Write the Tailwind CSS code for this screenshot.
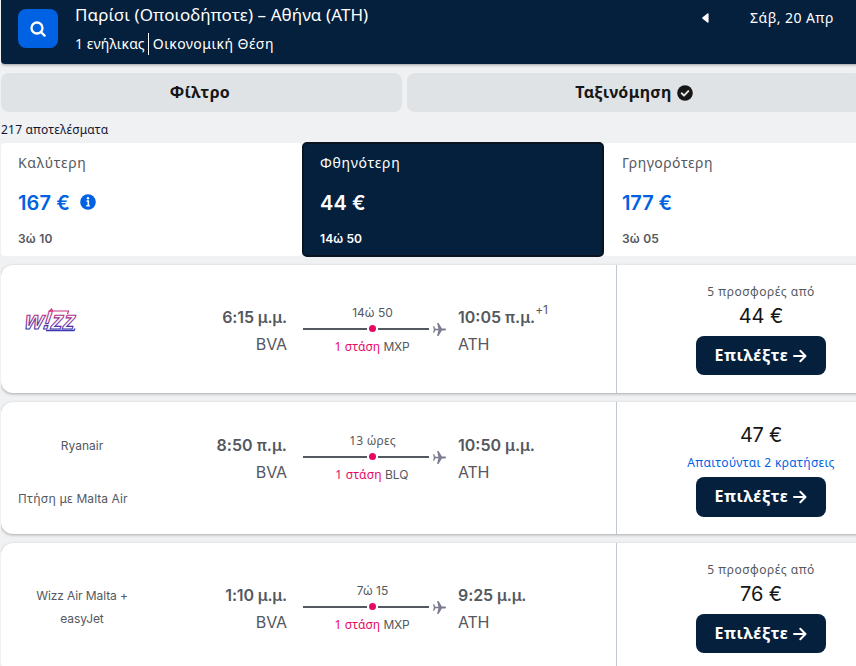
<!DOCTYPE html>
<html lang="el">
<head>
<meta charset="utf-8">
<title>Πτήσεις Παρίσι – Αθήνα</title>
<meta name="viewport" content="width=device-width">
<script src="https://cdn.jsdelivr.net/npm/@tailwindcss/browser@4"></script>
</head>
<body class="h-[666px] w-[856px] overflow-hidden bg-[#eff1f2] font-['Noto_Sans',sans-serif] text-[#545860]">
<svg class="absolute h-0 w-0" aria-hidden="true">
  <defs>
    <symbol id="plane" viewBox="0 0 12 12"><path d="M0 3h1l1.300 2.200h2.700L3.800 0h1.300l3.100 5.100h2.600c1.600 0 1.600 1.800 0 1.800H8.200L5.100 12H3.800l1.200-5.200H2.300L1 9H0l.8-3z" fill="#7b7b90"/></symbol>
    <symbol id="arrow" viewBox="0 0 14 14"><path d="M1 7h11M7.300 1.800L12.500 7l-5.200 5.200" fill="none" stroke="#fff" stroke-width="2" stroke-linecap="round" stroke-linejoin="round"/></symbol>
  </defs>
</svg>
<div class="ml-px flex h-[666px] w-[855px] flex-col overflow-hidden">
  <header class="flex h-16 w-[880px] shrink-0 rounded-bl-[4px] bg-[#05203c] pl-[17px] text-white shadow-[0_1px_3px_rgba(37,32,31,0.4)]">
    <button class="mt-[9px] flex h-[39px] w-10 items-center justify-center rounded-[8px] bg-[#0062e3]">
      <svg class="h-4 w-4" viewBox="0 0 16 16" fill="none" stroke="#fff" stroke-width="2.300" stroke-linecap="round"><circle cx="7" cy="7" r="5.500"/><path d="M11.200 11.200L14.600 14.600"/></svg>
    </button>
    <div class="ml-[17px] w-[621px] whitespace-nowrap">
      <div class="mt-[3px] h-6 text-[17px] leading-6 tracking-[0.08px]">Παρίσι (Οποιοδήποτε) – Αθήνα (ATH)</div>
      <div class="mt-[5px] flex h-6 items-center text-[14px] leading-6"><span class="tracking-[0.1px]">1 ενήλικας</span><span class="mx-[3px] h-[22px] w-px bg-white"></span><span class="pl-[1px] tracking-[0.45px]">Οικονομική Θέση</span></div>
    </div>
    <svg class="mt-[13px] ml-[6px] h-[10px] w-[7px]" viewBox="0 0 7 10"><path d="M5.400.4C6 0 6.600.3 6.600 1v8c0 .7-.6 1-1.200.6L.6 5.700a.9.900 0 0 1 0-1.400z" fill="#fff"/></svg>
    <div class="mt-[6px] ml-[41px] h-6 text-[14px] leading-6 whitespace-nowrap tracking-[0.45px]">Σάβ, 20 Απρ</div>
  </header>

  <div class="mt-[9px] flex h-[39px] shrink-0 gap-[5px] text-[16px] leading-6 font-bold text-[#161616]">
    <button class="flex w-[401px] shrink-0 items-center justify-center rounded-[8px] bg-[#e0e3e5] pr-[3px] pb-[2px] tracking-[0.35px]">Φίλτρο</button>
    <button class="flex w-[454px] shrink-0 items-center justify-center gap-[5px] rounded-[8px] bg-[#e0e3e5] pb-[2px] tracking-[0.3px]"><span>Ταξινόμηση</span>
      <svg class="mt-[2px] h-4 w-4" viewBox="0 0 16 16"><circle cx="8" cy="8" r="7.800" fill="#161616"/><path d="M4.700 8.300l2.300 2.300 4.300-4.500" fill="none" stroke="#e0e3e5" stroke-width="2" stroke-linecap="round" stroke-linejoin="round"/></svg>
    </button>
  </div>
  <div class="-ml-px mt-[8px] h-5 shrink-0 pl-px text-[12px] leading-5 tracking-[0.2px] text-[#161633]">217 αποτελέσματα</div>

  <div class="mt-[3px] flex h-[113px] shrink-0 rounded-[4px]">
    <div class="w-[301px] shrink-0 rounded-[4px] bg-white pl-[17px]">
      <div class="mt-[9px] h-[22px] text-[14px] leading-[22px] tracking-[0.7px]">Καλύτερη</div>
      <div class="mt-[16px] flex h-[26px] items-center gap-[10px] font-['Inter'] text-[20px] leading-[26px] font-semibold tracking-[0.1px] text-[#0062e3]">167 €
        <svg class="-mt-[2px] h-4 w-4" viewBox="0 0 16 16"><circle cx="8" cy="8" r="7.800" fill="#0062e3"/><circle cx="8" cy="4.300" r="1.200" fill="#fff"/><path d="M6.500 7H8.300v4.300M6.300 11.700h3.500" fill="none" stroke="#fff" stroke-width="1.600"/></svg>
      </div>
      <div class="mt-[14px] h-[18px] font-['Inter'] text-[12px] leading-[18px] font-semibold tracking-[0.2px]">3ώ 10</div>
    </div>
    <div class="-mt-px h-[115px] w-[302px] shrink-0 rounded-[5px] border-2 border-[#0a1420] bg-[#05203c] pl-[16px] text-white">
      <div class="mt-[8px] h-[22px] text-[14px] leading-[22px] tracking-[0.7px]">Φθηνότερη</div>
      <div class="mt-[16px] h-[26px] font-['Inter'] text-[20px] leading-[26px] font-semibold tracking-[0.1px]">44 €</div>
      <div class="mt-[14px] h-[18px] font-['Inter'] text-[12px] leading-[18px] font-semibold tracking-[0.1px]">14ώ 50</div>
    </div>
    <div class="w-[301px] shrink-0 bg-white pl-[18px]">
      <div class="mt-[9px] h-[22px] text-[14px] leading-[22px] tracking-[0.5px]">Γρηγορότερη</div>
      <div class="mt-[16px] h-[26px] font-['Inter'] text-[20px] leading-[26px] font-semibold tracking-[-0.1px] text-[#0062e3]">177 €</div>
      <div class="mt-[14px] h-[18px] font-['Inter'] text-[12px] leading-[18px] font-semibold tracking-[0.2px]">3ώ 05</div>
    </div>
  </div>

  <article class="mt-[9px] flex h-32 w-[904px] shrink-0 rounded-[12px] bg-white shadow-[0_1px_3px_rgba(37,32,31,0.35)]">
    <div class="w-[162px] shrink-0 pt-[37px] pl-[21px]">
      <svg class="h-[38px] w-[66px] overflow-visible" viewBox="0 -4 66 38">
        <defs><linearGradient id="wizz" gradientUnits="userSpaceOnUse" x1="0" y1="-18" x2="0" y2="2"><stop offset="0" stop-color="#d8307f"/><stop offset="1" stop-color="#3333ad"/></linearGradient></defs>
        <path d="M27 5.500l2.500-2.500 1 2h16l-1 3" fill="none" stroke="#c8357f" stroke-width="1.200"/>
        <path d="M24 24.500h28l1-2" fill="none" stroke="#3b38ae" stroke-width="1.300"/>
        <g transform="translate(2 22.500) skewX(-8)">
          <text x="0" y="0" textLength="50" lengthAdjust="spacingAndGlyphs" font-family="Liberation Sans" font-size="26" font-weight="bold" font-style="italic" fill="#fff" stroke="url(#wizz)" stroke-width="1.200">w!zz</text>
        </g>
      </svg>
    </div>
    <div class="w-[124px] shrink-0 pt-[40px] text-right font-['Inter'] whitespace-nowrap">
      <div class="h-6 text-[16px] leading-6 font-semibold tracking-[-0.15px]">6:15 μ.μ.</div>
      <div class="mt-[3px] h-6 text-[16px] leading-6 tracking-[-0.1px]">BVA</div>
    </div>
    <div class="ml-[16px] flex w-[145px] shrink-0 flex-col pt-[38px] text-[12px] leading-[18px]">
      <div class="h-[18px] w-[139px] pt-px text-center font-['Inter']">14ώ 50</div>
      <div class="flex h-4 items-center"><i class="h-[2px] w-[64px] bg-[#545860]"></i><i class="mr-px ml-[2px] -mt-px mb-px h-[7px] w-[7px] rounded-full bg-[#e70866]"></i><i class="ml-px h-[2px] w-[51px] bg-[#545860]"></i><svg class="ml-[4px] h-[13px] w-[13px]"><use href="#plane"/></svg></div>
      <div class="w-[138px] pt-px text-center"><span class="tracking-[0.1px] text-[#e70866]">1 στάση</span> <span class="font-['Inter'] tracking-[-0.2px]">MXP</span></div>
    </div>
    <div class="ml-[10px] w-[158px] shrink-0 pt-[40px] font-['Inter'] whitespace-nowrap">
      <div class="flex h-6 text-[16px] leading-6 font-semibold">10:05 π.μ.<span class="-mt-[7px] text-[12px] font-normal tracking-[-0.2px]">+1</span></div>
      <div class="mt-[3px] h-6 text-[16px] leading-6 tracking-[-0.2px]">ATH</div>
    </div>
    <div class="flex w-[289px] shrink-0 flex-col items-center border-l border-[#c1c7cf] pt-[18px]">
      <div class="h-[18px] text-[12px] leading-[18px] tracking-[0.55px]">5 προσφορές από</div>
      <div class="h-7 pt-px font-['Inter'] text-[20px] leading-7 tracking-[-0.1px] text-[#161616]">44 €</div>
      <button class="mt-[7px] flex h-[39px] w-[130px] items-center justify-center gap-[5px] rounded-[8px] bg-[#05203c] pb-[2px] text-[16px] leading-6 font-bold tracking-[0.55px] text-white">Επιλέξτε <svg class="mt-[2px] h-[14px] w-[14px]"><use href="#arrow"/></svg></button>
    </div>
  </article>

  <article class="mt-[9px] flex h-[132px] w-[904px] shrink-0 rounded-[12px] bg-white shadow-[0_1px_3px_rgba(37,32,31,0.35)]">
    <div class="w-[162px] shrink-0 pt-[35px] text-[12px] leading-[18px]">
      <div class="text-center font-['Inter']">Ryanair</div>
      <div class="mt-[35px] pl-[17px] tracking-[0.3px]">Πτήση με <span class="font-['Inter'] tracking-[0.05px]">Malta Air</span></div>
    </div>
    <div class="w-[124px] shrink-0 pt-[31px] text-right font-['Inter'] whitespace-nowrap">
      <div class="h-6 text-[16px] leading-6 font-semibold tracking-[0.05px]">8:50 π.μ.</div>
      <div class="mt-[3px] h-6 text-[16px] leading-6 tracking-[-0.1px]">BVA</div>
    </div>
    <div class="ml-[16px] flex w-[145px] shrink-0 flex-col pt-[29px] text-[12px] leading-[18px]">
      <div class="h-[18px] w-[139px] pt-px text-center tracking-[0.2px]">13 ώρες</div>
      <div class="flex h-4 items-center"><i class="h-[2px] w-[64px] bg-[#545860]"></i><i class="mr-px ml-[2px] -mt-px mb-px h-[7px] w-[7px] rounded-full bg-[#e70866]"></i><i class="ml-px h-[2px] w-[51px] bg-[#545860]"></i><svg class="ml-[4px] h-[13px] w-[13px]"><use href="#plane"/></svg></div>
      <div class="w-[138px] pt-px text-center"><span class="tracking-[0.2px] text-[#e70866]">1 στάση</span> <span class="font-['Inter'] tracking-[0.1px]">BLQ</span></div>
    </div>
    <div class="ml-[10px] w-[158px] shrink-0 pt-[31px] font-['Inter'] whitespace-nowrap">
      <div class="h-6 text-[16px] leading-6 font-semibold">10:50 μ.μ.</div>
      <div class="mt-[3px] h-6 text-[16px] leading-6 tracking-[-0.2px]">ATH</div>
    </div>
    <div class="flex w-[289px] shrink-0 flex-col items-center border-l border-[#c1c7cf] pt-[18px]">
      <div class="h-7 pt-px font-['Inter'] text-[20px] leading-7 tracking-[-0.3px] text-[#161616]">47 €</div>
      <div class="mt-[6px] h-[18px] text-[12px] leading-[18px] tracking-[0.35px] text-[#0062e3]">Απαιτούνται 2 κρατήσεις</div>
      <button class="mt-[5px] flex h-10 w-[130px] items-center justify-center gap-[5px] rounded-[8px] bg-[#05203c] pb-[2px] text-[16px] leading-6 font-bold tracking-[0.55px] text-white">Επιλέξτε <svg class="mt-[2px] h-[14px] w-[14px]"><use href="#arrow"/></svg></button>
    </div>
  </article>

  <article class="mt-[9px] flex h-[132px] w-[904px] shrink-0 rounded-[12px] bg-white shadow-[0_1px_3px_rgba(37,32,31,0.35)]">
    <div class="w-[162px] shrink-0 pt-[41px] text-center font-['Inter'] text-[12px] leading-[23px] tracking-[-0.1px]">Wizz Air Malta +<br>easyJet</div>
    <div class="w-[124px] shrink-0 pt-[40px] text-right font-['Inter'] whitespace-nowrap">
      <div class="h-6 text-[16px] leading-6 font-semibold tracking-[-0.15px]">1:10 μ.μ.</div>
      <div class="mt-[3px] h-6 text-[16px] leading-6 tracking-[-0.1px]">BVA</div>
    </div>
    <div class="ml-[16px] flex w-[145px] shrink-0 flex-col pt-[38px] text-[12px] leading-[18px]">
      <div class="h-[18px] w-[139px] pt-px text-center font-['Inter']">7ώ 15</div>
      <div class="flex h-4 items-center"><i class="h-[2px] w-[64px] bg-[#545860]"></i><i class="mr-px ml-[2px] -mt-px mb-px h-[7px] w-[7px] rounded-full bg-[#e70866]"></i><i class="ml-px h-[2px] w-[51px] bg-[#545860]"></i><svg class="ml-[4px] h-[13px] w-[13px]"><use href="#plane"/></svg></div>
      <div class="w-[138px] pt-px text-center"><span class="tracking-[0.1px] text-[#e70866]">1 στάση</span> <span class="font-['Inter'] tracking-[-0.2px]">MXP</span></div>
    </div>
    <div class="ml-[10px] w-[158px] shrink-0 pt-[40px] font-['Inter'] whitespace-nowrap">
      <div class="h-6 text-[16px] leading-6 font-semibold tracking-[-0.1px]">9:25 μ.μ.</div>
      <div class="mt-[3px] h-6 text-[16px] leading-6 tracking-[-0.2px]">ATH</div>
    </div>
    <div class="flex w-[289px] shrink-0 flex-col items-center border-l border-[#c1c7cf] pt-[18px]">
      <div class="h-[18px] text-[12px] leading-[18px] tracking-[0.55px]">5 προσφορές από</div>
      <div class="h-7 pt-px font-['Inter'] text-[20px] leading-7 tracking-[-0.1px] text-[#161616]">76 €</div>
      <button class="mt-[7px] flex h-[39px] w-[130px] items-center justify-center gap-[5px] rounded-[8px] bg-[#05203c] pb-[2px] text-[16px] leading-6 font-bold tracking-[0.55px] text-white">Επιλέξτε <svg class="mt-[2px] h-[14px] w-[14px]"><use href="#arrow"/></svg></button>
    </div>
  </article>
</div>
</body>
</html>
